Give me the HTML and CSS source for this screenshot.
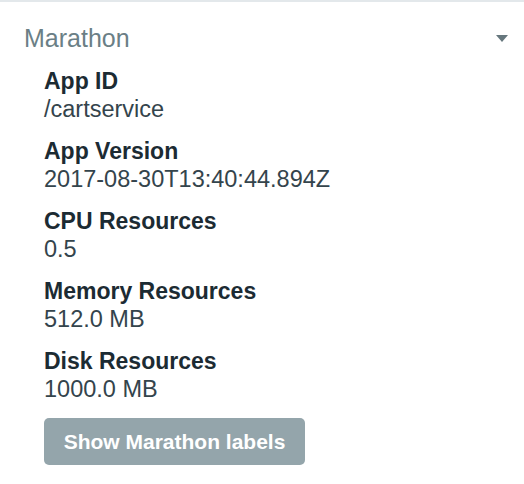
FILE: index.html
```html
<!DOCTYPE html>
<html lang="en">
<head>
<meta charset="utf-8">
<title>Marathon</title>
<link rel="stylesheet" href="styles.css">
</head>
<body>
<section class="panel">
  <header class="head">
    <h2 class="title">Marathon</h2>
    <span class="caret" aria-hidden="true"></span>
  </header>
  <dl class="fields">
    <div class="field">
      <dt>App ID</dt>
      <dd>/cartservice</dd>
    </div>
    <div class="field">
      <dt>App Version</dt>
      <dd>2017-08-30T13:40:44.894Z</dd>
    </div>
    <div class="field">
      <dt>CPU Resources</dt>
      <dd>0.5</dd>
    </div>
    <div class="field">
      <dt>Memory Resources</dt>
      <dd>512.0 MB</dd>
    </div>
    <div class="field">
      <dt>Disk Resources</dt>
      <dd>1000.0 MB</dd>
    </div>
  </dl>
  <div class="actions">
    <button class="btn" type="button">Show Marathon labels</button>
  </div>
</section>
</body>
</html>
```
FILE: styles.css
```css
html, body {
  margin: 0;
  padding: 0;
  background: #ffffff;
}

body {
  font-family: "Liberation Sans", Arial, sans-serif;
  -webkit-font-smoothing: antialiased;
}

.panel {
  border-top: 2px solid #e3e8eb;
  padding: 20px 16px 0 24px;
}

.head {
  display: flex;
  align-items: center;
  justify-content: space-between;
  height: 32px;
}

.title {
  margin: 0;
  font-size: 25px;
  line-height: 32px;
  font-weight: normal;
  color: #6b7f86;
}

.caret {
  width: 0;
  height: 0;
  border-left: 6px solid transparent;
  border-right: 6px solid transparent;
  border-top: 7px solid #66777d;
  margin-top: 1px;
}

.fields {
  margin: 13px 0 0;
  padding-left: 20px;
  display: flex;
  flex-direction: column;
  gap: 14px;
}

.field dt {
  font-size: 23px;
  line-height: 28px;
  font-weight: bold;
  color: #1c2b33;
}

.field dd {
  margin: 0;
  font-size: 23.5px;
  line-height: 28px;
  color: #34444c;
}

.actions {
  padding: 15px 0 0 20px;
}

.btn {
  width: 261px;
  height: 47px;
  border: 0;
  border-radius: 5px;
  background: #94a5ab;
  color: #ffffff;
  font-family: "Liberation Sans", Arial, sans-serif;
  font-size: 21px;
  font-weight: bold;
  padding: 0;
  cursor: pointer;
}
```
